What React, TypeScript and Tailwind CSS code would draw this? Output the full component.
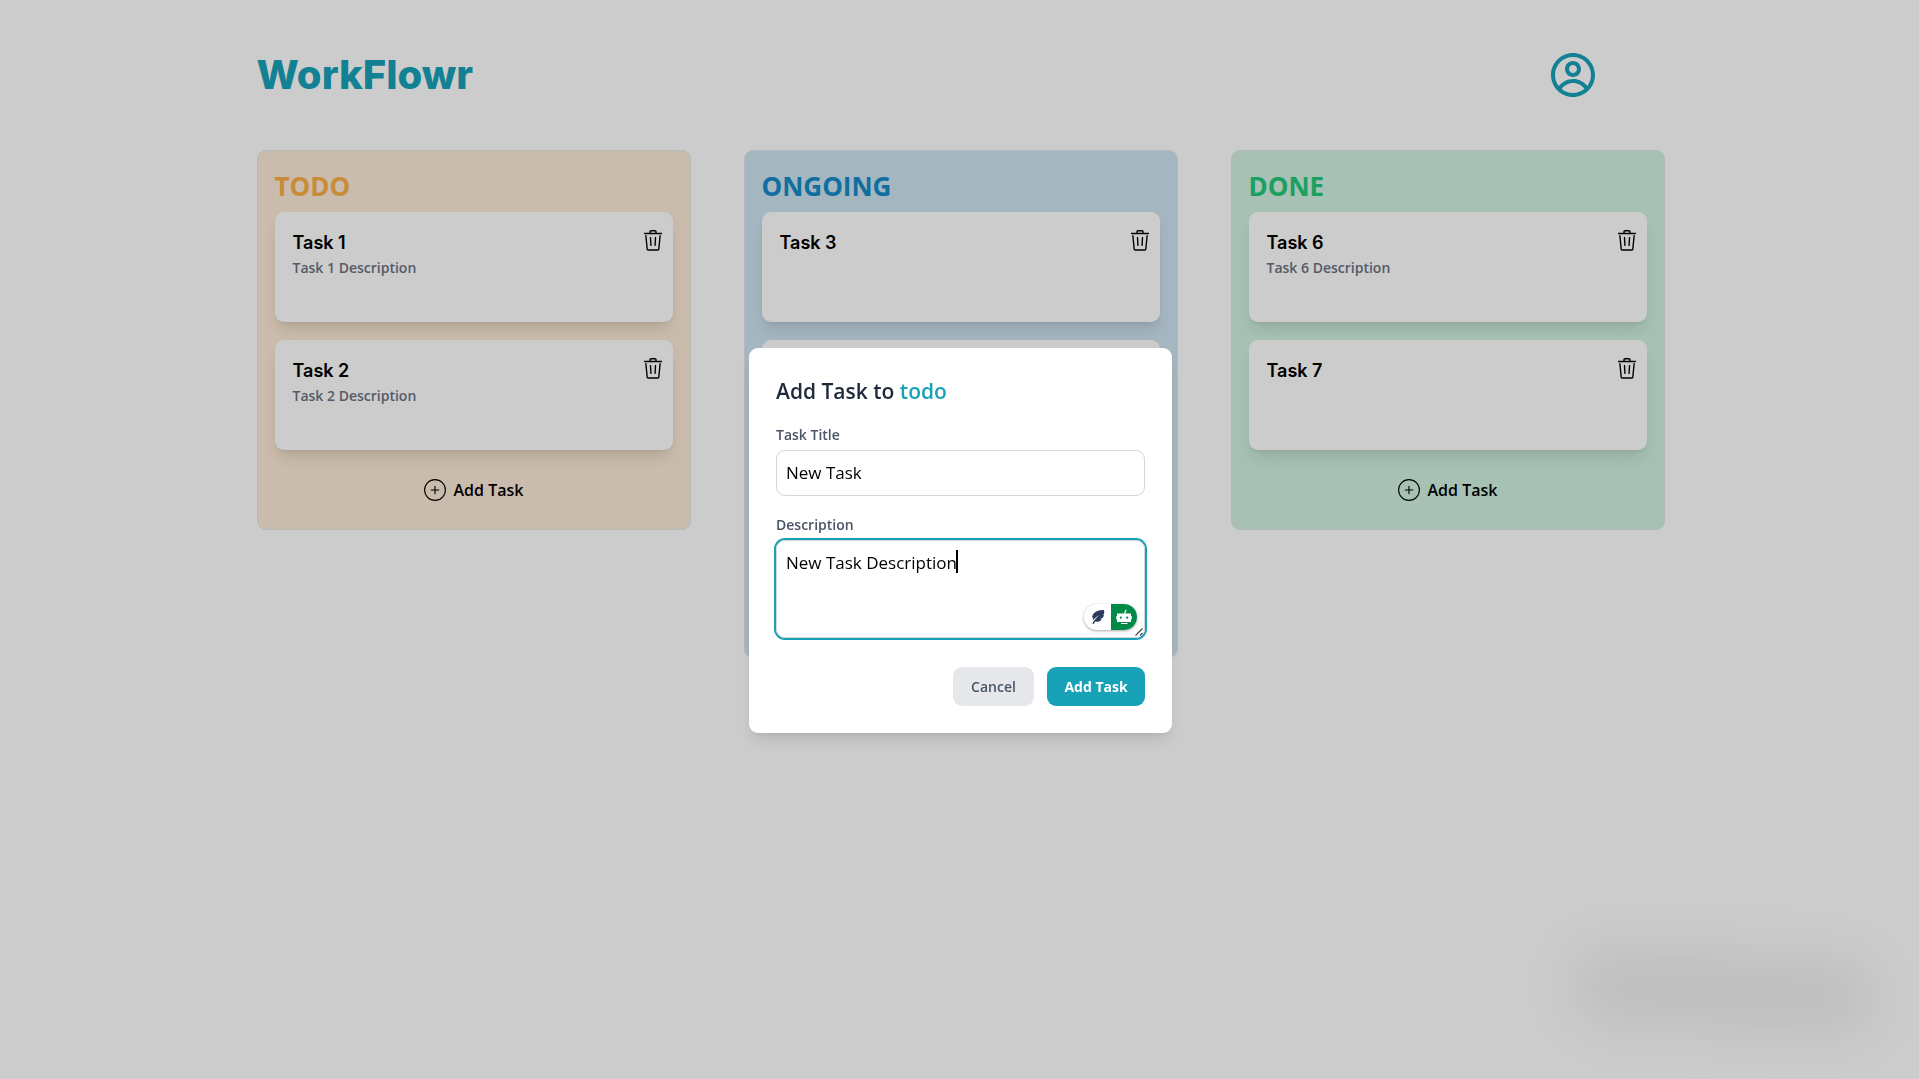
import { CgProfile } from "react-icons/cg";
import { GoTrash } from "react-icons/go";

type Task = { id: number; title?: string; description?: string };

type ColumnData = {
  name: string;
  box: string;
  heading: string;
  tasks: Task[];
};

const columns: ColumnData[] = [
  {
    name: "TODO",
    box: "bg-[#fdebd7]",
    heading: "text-[#fbaf48]",
    tasks: [
      { id: 1, title: "Task 1", description: "Task 1 Description" },
      { id: 2, title: "Task 2", description: "Task 2 Description" },
    ],
  },
  {
    name: "ONGOING",
    box: "bg-[#cee4f0]",
    heading: "text-[#148bc8]",
    tasks: [{ id: 3, title: "Task 3" }, { id: 4 }, { id: 5 }],
  },
  {
    name: "DONE",
    box: "bg-[#d1f2e2]",
    heading: "text-[#22c87a]",
    tasks: [
      { id: 6, title: "Task 6", description: "Task 6 Description" },
      { id: 7, title: "Task 7" },
    ],
  },
];

function PlusCircle() {
  return (
    <svg viewBox="0 0 22 22" className="size-[22px]" fill="none" stroke="currentColor" strokeWidth="1.1" aria-hidden="true">
      <circle cx="11" cy="11" r="10.4" />
      <path d="M11 7.2v7.6M7.2 11h7.6" strokeLinecap="round" />
    </svg>
  );
}

function TaskCard({ task }: { task: Task }) {
  return (
    <li className="flex h-[110px] items-start justify-between rounded-[9px] bg-white py-[18px] pr-[9px] pl-[18px] shadow-lg">
      <div>
        {task.title && (
          <h3 className="font-[Inter,sans-serif] text-[18px] leading-[25px] font-semibold text-black">{task.title}</h3>
        )}
        {task.description && (
          <p className="mt-[2px] text-[14px] leading-[22px] font-semibold text-gray-500">{task.description}</p>
        )}
      </div>
      <button type="button" aria-label={`Delete task ${task.id}`} className="text-black">
        <GoTrash className="size-[22px]" />
      </button>
    </li>
  );
}

function Column({ column }: { column: ColumnData }) {
  return (
    <section className={`rounded-[9px] border border-gray-200 px-[17px] pt-[18px] pb-[17px] ${column.box}`}>
      <h2 className={`mb-2 text-[26px] leading-[35px] font-bold ${column.heading}`}>{column.name}</h2>
      <ul className="flex flex-col gap-[18px]">
        {column.tasks.map((task) => (
          <TaskCard key={task.id} task={task} />
        ))}
      </ul>
      <button type="button" className="mt-[18px] flex h-[44px] w-full items-center justify-center gap-2 text-[16px] font-semibold text-black">
        <PlusCircle />
        Add Task
      </button>
    </section>
  );
}

function WritingAssistant() {
  return (
    <div className="absolute right-2 bottom-2 flex h-[26px] w-[53px] overflow-hidden rounded-full bg-white shadow-[0_1px_3px_rgba(0,0,0,0.35)]">
      <div className="flex w-[27px] items-center justify-center">
        <svg viewBox="0 0 14 16" className="h-[16px] w-[14px]" aria-hidden="true">
          <path
            d="M12.8 1C9 .6 5 1.800 2.700 4.600 1.600 6 1 7.500 1.200 9l1-.8-.4 3.300C3.500 9.400 5.500 7.800 8.500 5.800 5.800 8.400 3.200 10.900 1.300 14.600l1.700.3c.3-.9.700-1.500 1.200-2.300 2.700.5 5-.4 6.600-2.200l-1.500-.3 2.600-1.300c.6-1 .9-2 1.100-3l-1.200.1 1.400-1.500c.2-1.200.1-2.400-.4-3.400z"
            fill="#2b3a5e"
          />
        </svg>
      </div>
      <div className="flex flex-1 items-center justify-center bg-[#008a47]">
        <svg viewBox="0 0 16 16" className="size-[16px]" aria-hidden="true">
          <path d="M8.300 5 10 1.200" stroke="#fff" strokeWidth="1.200" strokeLinecap="round" />
          <rect x="1" y="4.500" width="14" height="8.500" fill="#fff" />
          <rect x="0.300" y="7" width="15.400" height="3.500" fill="#fff" />
          <path d="M5 14.500h6.500" stroke="#fff" strokeWidth="1.200" />
          <circle cx="4.800" cy="8.700" r="1.100" fill="#008a47" />
          <circle cx="11.200" cy="8.700" r="1.100" fill="#008a47" />
        </svg>
      </div>
    </div>
  );
}

function ResizeGrip() {
  return (
    <svg viewBox="0 0 8 8" className="pointer-events-none absolute right-[2px] bottom-[2px] size-[8px]" stroke="#444" strokeWidth="1.2" aria-hidden="true">
      <path d="M.5 7.500 7.500.5M5 7.500 7.500 5" />
    </svg>
  );
}

function AddTaskDialog() {
  return (
    <div className="fixed inset-0 flex items-center justify-center bg-black/20 pt-[2px] pl-[2px]">
      <form
        role="dialog"
        aria-labelledby="dialog-title"
        className="w-full max-w-[423px] rounded-[9px] bg-white p-[27px] shadow-lg"
      >
        <h2 id="dialog-title" className="text-[21px] leading-[33px] font-semibold text-gray-800">
          Add Task to <span className="text-[#17a2b8]">todo</span>
        </h2>
        <label htmlFor="task-title" className="mt-4 block text-[14px] leading-[22px] font-semibold text-gray-600">
          Task Title
        </label>
        <input
          id="task-title"
          type="text"
          defaultValue="New Task"
          className="mt-1 block h-[46px] w-full rounded-[9px] border border-gray-300 px-[9px] pb-[2px] text-[17px] text-black outline-none"
        />
        <label htmlFor="task-description" className="mt-[18px] block text-[14px] leading-[22px] font-semibold text-gray-600">
          Description
        </label>
        <div className="relative mt-1">
          <textarea
            id="task-description"
            defaultValue="New Task Description"
            className="block h-[98px] w-full resize-none rounded-[9px] border border-gray-300 p-[9px] text-[17px] leading-[26px] text-black ring-2 ring-[#17a2b8] outline-none"
          />
          <span className="absolute top-[10px] left-[180px] h-[23px] w-[2px] bg-black" aria-hidden="true" />
          <WritingAssistant />
          <ResizeGrip />
        </div>
        <div className="mt-[29px] flex justify-end gap-[13px]">
          <button type="button" className="h-[39px] w-[81px] rounded-[9px] bg-gray-200 text-[14px] font-semibold text-gray-600">
            Cancel
          </button>
          <button type="button" className="h-[39px] w-[98px] rounded-[9px] bg-[#17a2b8] text-[14px] font-bold text-white">
            Add Task
          </button>
        </div>
      </form>
    </div>
  );
}

export default function App() {
  return (
    <div className="min-h-screen overflow-hidden bg-white pl-[2px] font-['Open_Sans','Noto_Sans',sans-serif]">
      <div className="mx-auto max-w-[1408px]">
        <header className="flex h-[150px] items-center justify-between">
          <h1 className="font-[Inter,sans-serif] text-[40px] leading-[44px] font-extrabold text-[#17a2b8]">WorkFlowr</h1>
          <button type="button" aria-label="Profile" className="mr-[68px] text-[#17a2b8]">
            <CgProfile className="size-[48px]" />
          </button>
        </header>
        <main className="grid grid-cols-3 items-start gap-[53px]">
          {columns.map((column) => (
            <Column key={column.name} column={column} />
          ))}
        </main>
      </div>
      <AddTaskDialog />
      <div className="pointer-events-none fixed right-[46px] bottom-[50px] h-[74px] w-[300px] rotate-3 rounded-full bg-black/7 blur-[26px]" />
    </div>
  );
}
